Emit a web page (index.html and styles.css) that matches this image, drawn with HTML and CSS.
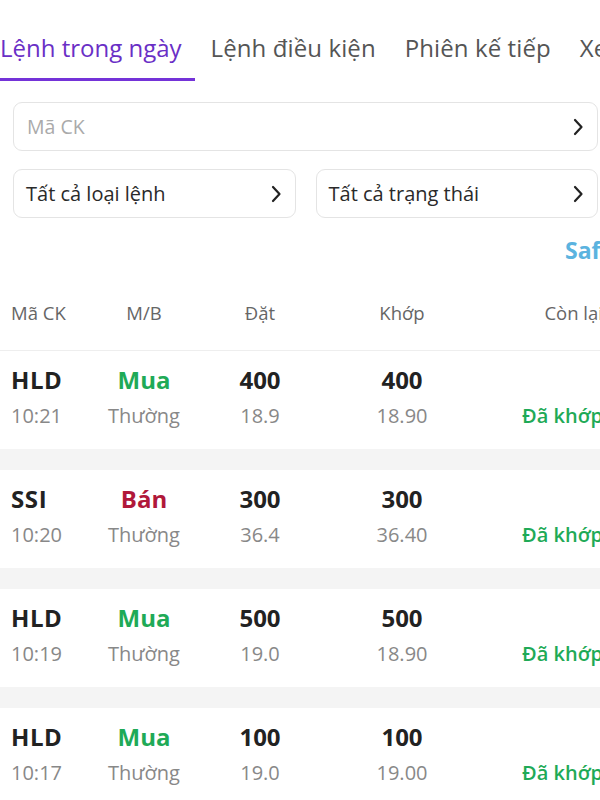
FILE: index.html
```html
<!DOCTYPE html>
<html lang="vi">
<head>
<meta charset="utf-8">
<link rel="stylesheet" href="styles.css">
</head>
<body>
<div class="page">
  <nav class="tabs">
    <div class="tab active">Lệnh trong ngày</div>
    <div class="tab">Lệnh điều kiện</div>
    <div class="tab">Phiên kế tiếp</div>
    <div class="tab">Xem</div>
  </nav>

  <div class="filters">
    <div class="field full">
      <span class="placeholder">Mã CK</span>
      <svg class="chev" width="12" height="18" viewBox="0 0 12 18"><path d="M3 2 L9.5 9 L3 16" fill="none" stroke="#222" stroke-width="2.2" stroke-linecap="round" stroke-linejoin="round"/></svg>
    </div>
    <div class="pair">
      <div class="field">
        <span class="value">Tất cả loại lệnh</span>
        <svg class="chev" width="12" height="18" viewBox="0 0 12 18"><path d="M3 2 L9.5 9 L3 16" fill="none" stroke="#222" stroke-width="2.2" stroke-linecap="round" stroke-linejoin="round"/></svg>
      </div>
      <div class="field">
        <span class="value">Tất cả trạng thái</span>
        <svg class="chev" width="12" height="18" viewBox="0 0 12 18"><path d="M3 2 L9.5 9 L3 16" fill="none" stroke="#222" stroke-width="2.2" stroke-linecap="round" stroke-linejoin="round"/></svg>
      </div>
    </div>
  </div>

  <div class="link-row"><span class="link">Safe</span></div>

  <div class="table">
    <div class="grid head">
      <div class="c1">Mã CK</div>
      <div class="c2">M/B</div>
      <div class="c3">Đặt</div>
      <div class="c4">Khớp</div>
      <div class="c5">Còn lại</div>
    </div>

    <div class="grid row">
      <div class="c1 sym">HLD</div>
      <div class="c2 buy">Mua</div>
      <div class="c3 qty">400</div>
      <div class="c4 qty">400</div>
      <div class="c5"></div>
      <div class="c1 sub">10:21</div>
      <div class="c2 sub">Thường</div>
      <div class="c3 sub">18.9</div>
      <div class="c4 sub">18.90</div>
      <div class="c5 status">Đã khớp</div>
    </div>
    <div class="gap"></div>

    <div class="grid row">
      <div class="c1 sym">SSI</div>
      <div class="c2 sell">Bán</div>
      <div class="c3 qty">300</div>
      <div class="c4 qty">300</div>
      <div class="c5"></div>
      <div class="c1 sub">10:20</div>
      <div class="c2 sub">Thường</div>
      <div class="c3 sub">36.4</div>
      <div class="c4 sub">36.40</div>
      <div class="c5 status">Đã khớp</div>
    </div>
    <div class="gap"></div>

    <div class="grid row">
      <div class="c1 sym">HLD</div>
      <div class="c2 buy">Mua</div>
      <div class="c3 qty">500</div>
      <div class="c4 qty">500</div>
      <div class="c5"></div>
      <div class="c1 sub">10:19</div>
      <div class="c2 sub">Thường</div>
      <div class="c3 sub">19.0</div>
      <div class="c4 sub">18.90</div>
      <div class="c5 status">Đã khớp</div>
    </div>
    <div class="gap"></div>

    <div class="grid row">
      <div class="c1 sym">HLD</div>
      <div class="c2 buy">Mua</div>
      <div class="c3 qty">100</div>
      <div class="c4 qty">100</div>
      <div class="c5"></div>
      <div class="c1 sub">10:17</div>
      <div class="c2 sub">Thường</div>
      <div class="c3 sub">19.0</div>
      <div class="c4 sub">19.00</div>
      <div class="c5 status">Đã khớp</div>
    </div>
  </div>
</div>
</body>
</html>
```

FILE: styles.css
```css
html, body {
  margin: 0;
  padding: 0;
  background: #ffffff;
}
body {
  width: 600px;
  height: 800px;
  overflow: hidden;
  font-family: "Open Sans", "Noto Sans", sans-serif;
  color: #222;
}
.page {
  width: 640px;
}

/* Tabs */
.tabs {
  display: flex;
  align-items: flex-end;
  gap: 29px;
  margin-left: -2px;
  padding-top: 26px;
  white-space: nowrap;
}
.tab {
  font-size: 24px;
  line-height: 44px;
  color: #555;
  padding-bottom: 8px;
  border-bottom: 3px solid transparent;
  letter-spacing: 0.1px;
}
.tab.active {
  color: #6a2fc6;
  border-bottom-color: #7433d8;
  padding-left: 2px;
  padding-right: 13px;
  margin-right: -13px;
  letter-spacing: 0;
}

/* Filters */
.filters {
  width: 585px;
  margin-left: 13px;
  margin-top: 21px;
  display: flex;
  flex-direction: column;
  gap: 18px;
}
.field {
  height: 49px;
  box-sizing: border-box;
  border: 1px solid #e4e4e4;
  border-radius: 9px;
  display: flex;
  align-items: center;
  justify-content: space-between;
  padding: 0 13px 0 12px;
  flex: 1;
}
.field.full {
  flex: none;
  padding-left: 13px;
}
.placeholder {
  font-size: 19.5px;
  color: #aaa;
}
.value {
  font-size: 20px;
  color: #2a2a2a;
}
.chev {
  display: block;
}
.pair {
  display: flex;
  gap: 20px;
}

/* Link row */
.link-row {
  height: 61px;
  padding-left: 565px;
  white-space: nowrap;
  box-sizing: border-box;
  padding-top: 16px;
}
.link {
  font-size: 23px;
  font-weight: 700;
  color: #5bb3df;
  line-height: 32px;
}

/* Table */
.table {
  width: 603px;
}
.grid {
  display: grid;
  grid-template-columns: 90px 86px 146px 138px 132px;
  padding-left: 11px;
  align-items: center;
}
.c1 { text-align: left; }
.c2 { text-align: center; }
.c3 { text-align: center; }
.c4 { text-align: center; }
.c5 { text-align: right; white-space: nowrap; }

.head {
  height: 72px;
  box-sizing: border-box;
  padding-bottom: 4px;
  border-bottom: 1px solid #eeeeee;
  font-size: 18.5px;
  color: #666;
}
.row {
  padding-top: 10px;
  padding-bottom: 16px;
  grid-auto-rows: 36px;
}
.sym, .qty, .buy, .sell {
  font-size: 24px;
  font-weight: 700;
  color: #222;
}
.sym { letter-spacing: 0.6px; }
.buy { color: #1faa57; }
.sell { color: #b0183a; }
.sub {
  font-size: 20px;
  color: #888;
}
.status {
  font-size: 20px;
  font-weight: 600;
  color: #1faa57;
}
.gap {
  height: 21px;
  background: #f4f4f4;
}
```
